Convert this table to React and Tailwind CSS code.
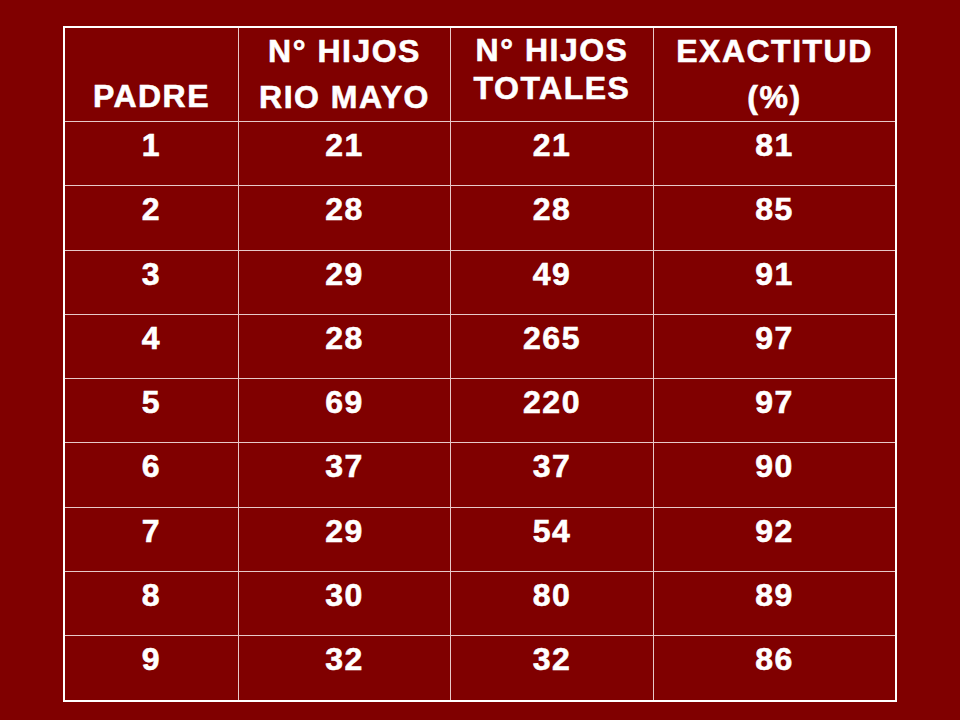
const rows = [
  ["1", "21", "21", "81"],
  ["2", "28", "28", "85"],
  ["3", "29", "49", "91"],
  ["4", "28", "265", "97"],
  ["5", "69", "220", "97"],
  ["6", "37", "37", "90"],
  ["7", "29", "54", "92"],
  ["8", "30", "80", "89"],
  ["9", "32", "32", "86"],
]

const widths = ["w-[173px]", "w-[212px]", "w-[203px]", "w-[242px]"]

export default function App() {
  return (
    <div className="w-[960px] h-[720px] bg-[#800000] pt-[26px] pl-[63px] font-['Liberation_Sans',Arial,sans-serif] font-bold text-white text-[32px] tracking-[1.5px] [-webkit-text-stroke:0.6px_white]">
      <div className="w-[834px] border-2 border-white">
        {/* Header */}
        <div className="flex h-[93px]">
          <div className={`${widths[0]} flex items-end justify-center pb-[6px] leading-[38px]`}>
            PADRE
          </div>
          <div className={`${widths[1]} border-l border-[#e8c8c8] flex flex-col items-center leading-[46px]`}>
            <span>N° HIJOS</span>
            <span>RIO MAYO</span>
          </div>
          <div className={`${widths[2]} border-l border-[#e8c8c8] flex flex-col items-center pt-[3px] leading-[38px]`}>
            <span>N° HIJOS</span>
            <span>TOTALES</span>
          </div>
          <div className={`${widths[3]} border-l border-[#e8c8c8] flex flex-col items-center leading-[46px]`}>
            <span>EXACTITUD</span>
            <span>(%)</span>
          </div>
        </div>
        {/* Body */}
        {rows.map((r, i) => (
          <div key={i} className="flex h-[64.3px] border-t border-[#e8c8c8]">
            {r.map((v, j) => (
              <div
                key={j}
                className={`${widths[j]} ${j > 0 ? "border-l border-[#e8c8c8]" : ""} flex justify-center pt-[3px] leading-[40px]`}
              >
                {v}
              </div>
            ))}
          </div>
        ))}
      </div>
    </div>
  )
}
